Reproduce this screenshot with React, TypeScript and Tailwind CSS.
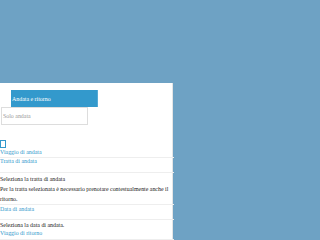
export default function App() {
    return (
        <div className="w-[320px] h-[240px] overflow-hidden bg-[#6ea2c4]" style={{ fontFamily: '"Liberation Serif", serif' }}>
            <div className="pt-[83px]">
                <div className="w-[173px] h-[157px] bg-white border-r border-[#e5e5e5] text-[5.9px] leading-[10px]">
                    <div className="pt-[7px] pl-[11px]">
                        <div className="w-[87px] h-[17px] bg-[#3399cc] border-r border-[#55aad6] text-white flex items-center pl-[1px]">Andata e ritorno</div>
                    </div>
                    <div className="pl-[1px]">
                        <div className="w-[87px] h-[18px] border border-[#dddddd] text-[#999999] flex items-center pl-[1px]">Solo andata</div>
                    </div>
                    <div className="pt-[15px]">
                        <div className="w-[6px] h-[8px] border border-[#3399cc]"></div>
                    </div>
                    <div className="text-[#3399cc] h-[9px] leading-[9px]">Viaggio di andata</div>
                    <div className="h-[16px] border-y border-[#eeeeee] text-[#3399cc] leading-[7px] w-[174px]">Tratta di andata</div>
                    <div className="text-[#222222] pt-[1px]">Seleziona la tratta di andata</div>
                    <div className="text-[#222222]">Per la tratta selezionata è necessario prenotare contestualmente anche il ritorno.</div>
                    <div className="h-[16px] border-y border-[#eeeeee] text-[#3399cc] leading-[9px] w-[174px]">Data di andata</div>
                    <div className="text-[#222222]">Seleziona la data di andata.</div>
                    <div className="text-[#3399cc] leading-[7px]">Viaggio di ritorno</div>
                    <div className="h-[16px] border-t border-[#eeeeee] w-[174px] mt-[2px]"></div>
                </div>
            </div>
        </div>
    );
}
